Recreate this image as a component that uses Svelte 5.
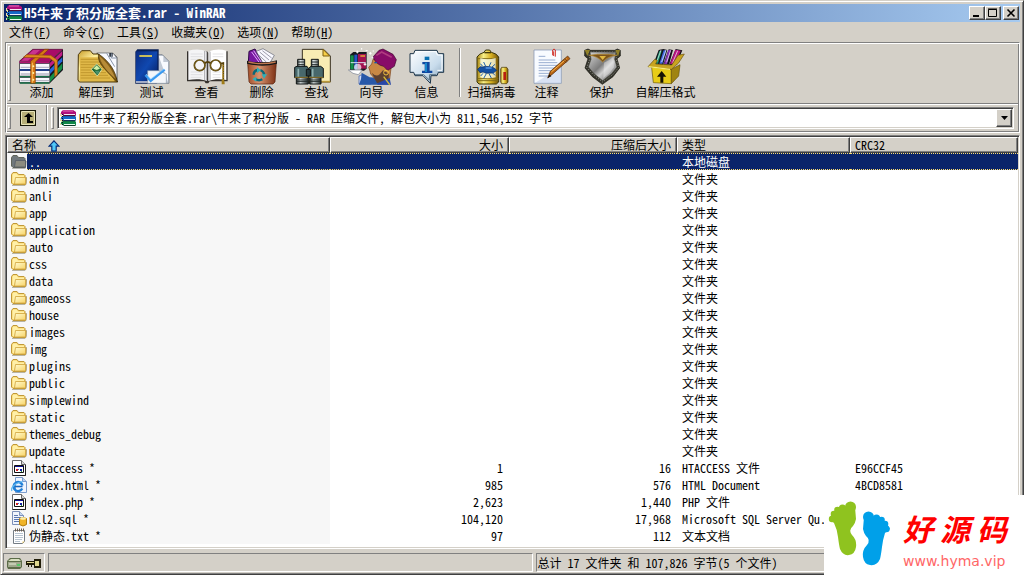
<script lang="ts">
  const menus = [
    { label: '文件', key: 'F' },
    { label: '命令', key: 'C' },
    { label: '工具', key: 'S' },
    { label: '收藏夹', key: 'O' },
    { label: '选项', key: 'N' },
    { label: '帮助', key: 'H' },
  ];

  const mainTools = [
    { id: 'add', label: '添加', view: '42 18 165 111' },
    { id: 'extract', label: '解压到', view: '207 18 165 111' },
    { id: 'test', label: '测试', view: '372 18 165 111' },
    { id: 'view', label: '查看', view: '537 18 165 111' },
    { id: 'delete', label: '删除', view: '-3 18 165 111' },
    { id: 'find', label: '查找', view: '162 18 165 111' },
    { id: 'wizard', label: '向导', view: '327 18 165 111' },
    { id: 'info', label: '信息', view: '492 18 165 111' },
  ];
  const archiveTools = [
    { id: 'scan', label: '扫描病毒', view: '27 18 165 111' },
    { id: 'comment', label: '注释', view: '195 18 165 111' },
    { id: 'protect', label: '保护', view: '360 18 165 111' },
    { id: 'sfx', label: '自解压格式', view: '552 18 165 111' },
  ];

  const folders = [
    'admin', 'anli', 'app', 'application', 'auto', 'css', 'data', 'gameoss', 'house',
    'images', 'img', 'plugins', 'public', 'simplewind', 'static', 'themes_debug', 'update',
  ];

  type Row = { icon: string; name: string; size?: string; packed?: string; type: string; crc?: string };

  const rows: Row[] = [
    { icon: 'up', name: '..', type: '本地磁盘' },
    ...folders.map((name) => ({ icon: 'folder', name, type: '文件夹' })),
    { icon: 'file', name: '.htaccess *', size: '1', packed: '16', type: 'HTACCESS 文件', crc: 'E96CCF45' },
    { icon: 'html', name: 'index.html *', size: '985', packed: '576', type: 'HTML Document', crc: '4BCD8581' },
    { icon: 'file', name: 'index.php *', size: '2,623', packed: '1,440', type: 'PHP 文件' },
    { icon: 'sql', name: 'nll2.sql *', size: '104,120', packed: '17,968', type: 'Microsoft SQL Server Qu...' },
    { icon: 'txt', name: '伪静态.txt *', size: '97', packed: '112', type: '文本文档' },
  ];

  let selected = $state(0);
</script>

{#snippet rar()}
  <svg class="small-icon" viewBox="0 0 16 16" aria-hidden="true">
    <path d="M1 2l2-2h10l3 2v3l-1 1H4L1 4z" fill="#b0107c" />
    <path d="M3 1h10" stroke="#e070b8" />
    <path d="M4 4.500h11" stroke="#f8e8f4" />
    <path d="M1 7l2-1h12l1 1v3l-1 1H4L1 9z" fill="#1668c8" />
    <path d="M4 9.500h11" stroke="#e8f0ff" />
    <path d="M1 12l2-1h12l1 1v3l-1 1H4l-3-2z" fill="#108848" />
    <path d="M4 14.500h11" stroke="#e8fff0" />
    <path d="M3 5.700h12.500M3 10.700h12.500M4 15.700h11.500" stroke="#14141c" stroke-width=".8" />
    <path d="M.5 3v3M1.500 5v2M.5 8v3M1.500 10v2M.5 13v2" stroke="#e8dca0" />
    <path d="M2.500 4v11" stroke="#101018" stroke-dasharray="1 1" />
  </svg>
{/snippet}

{#snippet toolIcon(id: string, view: string)}
  <svg class="tool-icon" viewBox={view} aria-hidden="true">
    {#if id === 'add'}
      <path d="M148 60l41-38v62l-41 41z" fill="#15151c" />
      <path d="M150 62l37-36v14l-37 36z" fill="#c01c84" />
      <path d="M150 82l37-36v12l-37 38z" fill="#2468d8" />
      <path d="M150 104l37-40v16l-37 40z" fill="#149048" />
      <path d="M58 58l40-36h90l-40 38z" fill="#a80c68" stroke="#46042c" stroke-width="2" />
      <path d="M64 56l36-32h20L84 56z" fill="#c83490" />
      <path d="M58 60h90v64H58z" fill="#20202c" />
      <path d="M60 65h88v16H60zM60 87h88v14H60zM60 107h88v14H60z" fill="#f8f8fc" />
      <path d="M62 76h86M62 96h86M62 116h86" stroke="#b8b8c8" stroke-width="4" />
      <path d="M58 61h90" stroke="#b01470" stroke-width="5" />
      <path d="M58 84h90" stroke="#2450b8" stroke-width="4" />
      <path d="M58 104h90M60 123h88" stroke="#187048" stroke-width="4" />
      <path d="M92 58l42-36h12l-40 38v64H92z" fill="#d87814" stroke="#7c3c04" stroke-width="2" />
      <path d="M80 38l72 2 20 14v43l-8 8V60l-16-12-78-2z" fill="#e08a20" stroke="#904c08" stroke-width="2" />
      <path d="M97 62v60" stroke="#f8c060" stroke-width="3" />
      <circle cx="100" cy="73" r="3" fill="#fff0a0" />
      <circle cx="100" cy="93" r="3" fill="#fff0a0" />
      <circle cx="100" cy="113" r="3" fill="#fff0a0" />
    {:else if id === 'extract'}
      <path d="M290 32h48l14 14v74H290z" fill="#202830" />
      <path d="M292 34h36v10h10v-10l12 13v62z" fill="#f8faff" />
      <path d="M320 34l24 40M334 34v14h16" fill="none" stroke="#8894a8" stroke-width="3" />
      <path d="M235 38l10-12h26l8 10h16l58 84H238l-4-6z" fill="url(#gold)" stroke="#4c3808" stroke-width="3" />
      <path d="M240 46h60l44 72H240z" fill="#e0b848" />
      <path d="M242 52h52M242 60h60M242 68h64M242 76h66M242 84h70M242 92h76M242 100h82M242 108h88" stroke="#b08820" stroke-width="2" />
      <path d="M296 36c-4 24 8 36 56 84-6-34-22-60-56-84z" fill="#805c18" stroke="#3c2800" stroke-width="2" />
      <path d="M298 42c4 20 18 42 48 68-8-24-24-48-48-68z" fill="#b88c38" />
      <path d="M274 82l16-16 16 16-14 20z" fill="#206830" stroke="#f8ffd8" stroke-width="2" />
      <path d="M280 80l10-10 10 10-10 4z" fill="#d0f0a8" />
      <path d="M284 86h16l-8 12z" fill="#48906c" />
    {:else if id === 'test'}
      <path d="M465 38h22l20 20v66h-42z" fill="#c0c8d4" stroke="#646c78" stroke-width="2" />
      <path d="M476 42h14v18h14v60" fill="#f8faff" />
      <path d="M406 29l6-7h64v96l-6 7h-64z" fill="#082058" />
      <path d="M408 28h64v90h-64z" fill="url(#blue)" />
      <path d="M408 120h64" stroke="#f0f0f8" stroke-width="4" />
      <path d="M418 42h38" stroke="#f0d850" stroke-width="5" />
      <path d="M443 86h32l24 10v28h-56z" fill="#f4f6fa" stroke="#8c98a8" stroke-width="2" />
      <path d="M436 99l16 18 42-34" fill="none" stroke="#3898f0" stroke-width="7" />
      <path d="M438 96l14 15 40-30" fill="none" stroke="#90d0ff" stroke-width="2" />
    {:else if id === 'view'}
      <path d="M561 28h60l4 4 4-4h54v90h-54l-4 6h-8l-4-6h-52z" fill="#34302c" />
      <path d="M565 26c20-5 40-5 56 3v88c-16-6-36-6-56-3z" fill="#f4f4f6" />
      <path d="M625 29c18-8 38-8 54-3v88c-18-3-38-3-54 3z" fill="#fff" />
      <path d="M614 27v87M620 30v86M630 29v86" stroke="#a8a8ac" stroke-width="3" />
      <path d="M572 36h36M572 44h36M572 52h30M572 90h36M572 98h36M572 106h32M638 36h32M638 44h32M638 90h24M638 98h24M638 106h24" stroke="#d4d4d8" stroke-width="2" />
      <g fill="none" stroke="#54400c" stroke-width="5">
        <circle cx="599" cy="70" r="16" />
        <circle cx="647" cy="70" r="16" />
        <path d="M613 65q10-10 20 0M662 65l8-2v62" />
      </g>
      <g fill="none" stroke="#b89838" stroke-width="1">
        <circle cx="599" cy="70" r="16" />
        <circle cx="647" cy="70" r="16" />
      </g>
      <path d="M669 68v58" stroke="#c09828" stroke-width="4" stroke-dasharray="5 2" />
      <path d="M665 112h7l2 15h-9z" fill="#a07c18" />
    {:else if id === 'delete'}
      <path d="M42 28l18-7 24 42H40z" fill="#7818a0" stroke="#2c0844" stroke-width="3" />
      <path d="M50 30l24 33M56 26l24 36" stroke="#e0b0f8" stroke-width="3" />
      <path d="M64 28l20-8 34 20-14 24H84z" fill="#f8f8ff" stroke="#606470" stroke-width="2" />
      <path d="M74 30l28 24M82 26l28 22M70 38l24 22" stroke="#9c9cac" stroke-width="3" />
      <path d="M38 62h86l-4 58-6 6H48l-6-6z" fill="url(#rust)" stroke="#54200c" stroke-width="2" />
      <path d="M36 56q44 12 90-1v10q-44 12-90 0z" fill="#181818" />
      <path d="M40 60q42 10 82 0" fill="none" stroke="#c07850" stroke-width="4" />
      <g fill="none" stroke="#0c6878" stroke-width="7">
        <path d="M56 98q0-12 12-14" />
        <path d="M76 84q10 4 12 14" />
        <path d="M82 112q-10 6-22-1" />
      </g>
      <path d="M66 76l12 9-12 8zM96 97l-9 13-7-13zM64 104v15l-12-8z" fill="#30b0b8" />
    {:else if id === 'find'}
      <path d="M202 22h64l20 20v78h-84z" fill="#f8ecb4" stroke="#383020" stroke-width="3" />
      <path d="M264 22v20h20z" fill="#f8d048" stroke="#7c5c0c" stroke-width="3" />
      <path d="M204 119h82" stroke="#b89838" stroke-width="5" />
      <g stroke="#101414" stroke-width="3">
        <path d="M188 52h21v22l11 8v44h-36V82l4-8z" fill="url(#steel)" />
        <path d="M229 52h21v22l8 8v44h-34V82l5-8z" fill="url(#steel)" />
        <path d="M179 76l7-3h30l4 6v28h-41z" fill="#48686c" />
        <path d="M221 79l7-6h29l8 6v28h-44z" fill="#48686c" />
        <path d="M214 82h12v20h-12z" fill="#283c40" />
      </g>
      <path d="M188 60h22M188 68h22M229 60h22M229 68h22M184 114h36M224 114h34M184 119h36M224 119h34" stroke="#202828" stroke-width="3" />
      <path d="M190 80v24M233 80v24" stroke="#90b0b0" stroke-width="5" />
      <path d="M180 106h40M222 106h42" stroke="#c89828" stroke-width="2" />
    {:else if id === 'wizard'}
      <path d="M345 38l10-8h40v50l-8 6h-42z" fill="#181820" />
      <path d="M346 40h10v42h-10z" fill="#14904c" />
      <path d="M358 38h9v44h-9z" fill="#2454c8" />
      <path d="M369 36h24v44h-24z" fill="#a01050" />
      <path d="M376 42h14" stroke="#f0b830" stroke-width="4" />
      <path d="M347 62h45" stroke="#d8e0f0" stroke-width="3" />
      <circle cx="368" cy="76" r="11" fill="#fff" opacity=".7" />
      <path d="M340 84h42l-12 14-16-4z" fill="#fff" stroke="#788090" stroke-width="2" />
      <path d="M372 102q12-8 22 4l14 20h-36z" fill="#d0dcf8" stroke="#3858a8" stroke-width="2" />
      <path d="M380 92l24 14 60 4v18h-92q8-16 8-36z" fill="#2858a8" />
      <path d="M404 84l-3-8 9-10 4-14 28 4 26 22-4 34-36 8-14-16-7-8z" fill="#c88844" stroke="#784018" stroke-width="2" />
      <path d="M410 92q14 14 24 5l10-12 18 10-2 28h-34z" fill="#5c4030" />
      <path d="M414 45l18-20 12-4 30 16 10 16-6 20-20 12-12-12q-22-4-32-28z" fill="#880c68" stroke="#3c042c" stroke-width="2" />
      <path d="M424 40l16-10 30 16" fill="none" stroke="#b03c80" stroke-width="5" />
      <circle cx="453" cy="92" r="7" fill="none" stroke="#f0c040" stroke-width="3" />
      <path d="M418 62h8" stroke="#1858a8" stroke-width="4" />
      <path d="M430 122l34-14 4 20h-42z" fill="#2848a8" />
      <path d="M446 104l18 24" stroke="#d8c038" stroke-width="4" />
      <g stroke="#fff" stroke-width="3">
        <path d="M363 30h8M367 26v8M392 26h6M402 34h8M406 30v8M386 67h8M390 63v8M410 46h5M380 18v5M413 27h4" />
      </g>
    {:else if id === 'info'}
      <path d="M540 25h66l4 10h16v56h-16l-4 10h-18l-2 23-22-23h-24l-4-10h-11V35h11z" fill="url(#ice)" stroke="#1c3448" stroke-width="3" />
      <path d="M543 29h60l4 10h14v46h-14" fill="none" stroke="#fff" stroke-width="3" />
      <path d="M540 98h26l17 16 1-16h20" fill="none" stroke="#5c7484" stroke-width="3" />
      <path d="M569 44h14v10h-14z" fill="#0870b0" />
      <path d="M562 60h22v26h8v7h-31v-7h8V67h-7z" fill="#1048a0" />
      <path d="M573 62v28" stroke="#20a8e0" stroke-width="4" />
    {:else if id === 'scan'}
      <path d="M92 24h12l5 7q16 3 22 14v75l-7 6H72l-6-6V45q6-10 21-14z" fill="url(#can)" stroke="#38340c" stroke-width="3" />
      <path d="M68 50h62M68 110h62M68 116h62" stroke="#806c18" stroke-width="3" />
      <path d="M88 32h20" stroke="#483c08" stroke-width="4" />
      <path d="M76 48q20 8 46 0v58q-24 6-46 0z" fill="#f8fcf0" opacity=".75" />
      <path d="M68 82l8-8 7 1 8-2 14 1 13 4 7 7-10 8-22 1-9-4-9 2z" fill="#1450a0" stroke="#082860" stroke-width="2" />
      <path d="M92 78h18" stroke="#60a0f0" stroke-width="4" />
      <path d="M84 74l-8-9M92 73l-6-13M102 74l6-13M110 76l10-9M84 94l-7 8M94 95l-8 14M102 95l7 13M112 92l8 8" fill="none" stroke="#2060a8" stroke-width="3" />
      <path d="M140 76h15l4 6v38l-4 5h-15l-3-5V81z" fill="url(#can)" stroke="#403008" stroke-width="2" />
      <path d="M145 90h8v24h-8z" fill="#b82010" />
    {:else if id === 'comment'}
      <path d="M240 24h82v100h-82z" fill="#f8fbff" stroke="#788cac" stroke-width="2" />
      <path d="M254 43h20M254 54h50M254 62h56M254 70h56M254 78h48M254 86h44M254 94h40M254 102h28" stroke="#98acd0" stroke-width="3" />
      <path d="M241 124l80-48v48z" fill="#a8bce0" opacity=".4" />
      <path d="M296 40V24q4-6 8 0v20M299 28v14" fill="none" stroke="#d03028" stroke-width="3" />
      <path d="M281 108l8-20 52-46 7 8-52 46z" fill="#b86414" stroke="#4c2404" stroke-width="2" />
      <path d="M292 90l46-40" stroke="#f8b850" stroke-width="3" />
      <path d="M281 108l5-11 6 6z" fill="#181008" />
      <path d="M328 53l9 10M332 50l8 8" stroke="#4c2c08" stroke-width="2" />
    {:else if id === 'protect'}
      <path d="M392 25l10-4 8 4h72l8-4 9 4v17l-10 8 8 28-20 26-32 23-30-23-22-26 9-28-10-8z" fill="#34342c" stroke="#181810" stroke-width="2" />
      <path d="M402 30h88l-4 20 8 26-18 22-30 22-28-22-20-22 10-26z" fill="none" stroke="#c8c8c0" stroke-width="2" stroke-dasharray="3 5" />
      <path d="M408 30h78l-4 22 7 23-16 20-27 21-26-21-17-20 8-23z" fill="url(#shield)" stroke="#484840" stroke-width="2" />
      <path d="M450 62l16-8 12-10 2 32-14 18-18 14z" fill="#fff" opacity=".35" />
      <path d="M406 40q24 2 40 20 16-18 42-20l-24-3h-34z" fill="#7c541c" stroke="#b88c30" stroke-width="2" />
      <path d="M436 42h20l-10 12z" fill="#e0b840" />
      <path d="M392 24h16l-8 18zM484 24h14l-6 20z" fill="#908028" />
    {:else if id === 'sfx'}
      <path d="M598 67l16-43 14-3 12 3-13 45zM628 68l16-46 13 2-12 44zM645 70l20-49 20 4-18 44z" fill="#14141c" />
      <path d="M604 65l12-38h7l-11 38z" fill="#14906c" />
      <path d="M616 65l13-40h8l-12 40z" fill="#4068e0" />
      <path d="M630 66l13-42h8l-12 42z" fill="#8030b0" />
      <path d="M648 66l16-43 16 3-16 40z" fill="#b81480" />
      <path d="M608 60l13-36M623 60l13-36M638 61l12-36M656 62l15-36" stroke="#fff" stroke-width="2" />
      <path d="M592 68l60 14v43l-54-3z" fill="#e8cc18" stroke="#68540c" stroke-width="2" />
      <path d="M652 82l26-14-4 34-22 23z" fill="#a08410" stroke="#68540c" stroke-width="2" />
      <path d="M582 74l20-22 8 3-5 11 48 3 19-29 19-4-18 28-21 18z" fill="#c8a420" stroke="#68500c" stroke-width="2" />
      <path d="M584 74l64 8" stroke="#f8ec78" stroke-width="4" />
      <path d="M619 122v-18h-10l14-17 14 17h-9v18z" fill="#181404" />
    {/if}
  </svg>
{/snippet}

{#snippet fileIcon(id: string)}
  <svg class="small-icon" viewBox="0 0 16 16" aria-hidden="true">
    {#if id === 'folder'}
      <path d="M1 14.500h13l1.500-2V6" fill="none" stroke="#b8b4a4" />
      <path d="M.5 3.500l1.500-2h4l1.500 2H13l1 1v2l1 .5-.5 6.500H2L.5 12z" fill="#f8d468" stroke="#c09838" />
      <path d="M1.500 4l1-1.500h3L7 4.500h6V6H5L3 12H1.500z" fill="#fff0a8" />
      <path d="M4.500 6.500h10v6.500H3.500z" fill="url(#folder)" stroke="#d0a440" stroke-width=".8" />
    {:else if id === 'up'}
      <path d="M.5 3.500l1.500-2h4l1.500 2H13l1 1v2l1 .5-.5 6.500H2L.5 12z" fill="#70787c" stroke="#606458" />
      <path d="M4.500 6.500h10v6.500H3.500z" fill="#8c8c80" stroke="#545c64" stroke-width=".8" />
      <path d="M1 14.500h13.500" stroke="#b4b4b0" />
    {:else if id === 'file'}
      <path d="M1.500.5h9l4 4v11h-13z" fill="#fff" stroke="#686868" />
      <path d="M14.500 4.500v11h-13" fill="none" stroke="#202020" />
      <path d="M10.500.5v4h4" fill="#d8d8d8" stroke="#686868" />
      <path d="M3.500 5.500h9v7h-9z" fill="#fff" stroke="#101010" />
      <path d="M4 6.500h8" stroke="#101090" />
      <path d="M5 9h2v2H5z" fill="#d02020" />
      <path d="M7 9h1v1H7z" fill="#3060e0" />
      <path d="M9 9h2v2H9z" fill="#1020a0" />
      <path d="M10 11h1v1h-1z" fill="#20a040" />
    {:else if id === 'html'}
      <path d="M4.500.5h7l4 4v11h-11z" fill="#f0f6ff" stroke="#7c9ccc" />
      <path d="M11.500.5v4h4" fill="#b8d0f0" stroke="#7c9ccc" />
      <path d="M2 9.500h9.500" stroke="#1868c0" stroke-width="1.600" />
      <path d="M11.200 11.500a4.500 4.500 0 1 1 .3-3" fill="none" stroke="#2080d8" stroke-width="2.400" />
      <path d="M1 14c-2-3 4-9 11-9.500" fill="none" stroke="#60b8f0" stroke-width="1.200" />
    {:else if id === 'sql'}
      <path d="M1.500.5h7l4 4v9h-11z" fill="#f0f4fc" stroke="#7c90b8" />
      <path d="M8.500.5v4h4" fill="#c8d8f0" stroke="#7c90b8" />
      <path d="M3 4.500h4M3 6.500h7M3 8.500h7M3 10.500h5" stroke="#5c78b0" />
      <path d="M8.500 7.500q3.500-2 7 0v6q-3.500 3-7 0z" fill="#f0b428" stroke="#b07c10" />
      <ellipse cx="12" cy="7.500" rx="3" ry="1.200" fill="#fff0a8" />
    {:else}
      <path d="M2.500 2.500h11v11l-2 2h-9z" fill="#fff" stroke="#747c84" />
      <path d="M4 5.500h8M4 7.500h8M4 9.500h8M4 11.500h7M4 13.500h5" stroke="#b8c4d0" />
      <path d="M4.500.5v3M6.500.5v3M8.500.5v3M10.500.5v3M12.500.5v3" stroke="#6c5c4c" />
      <path d="M11.500 15.500v-2h2z" fill="#e8c860" />
    {/if}
  </svg>
{/snippet}

<!-- shared gradients for the toolbar and folder icons -->
<svg class="defs" aria-hidden="true">
  <defs>
    <linearGradient id="gold" x2="1" y2="1">
      <stop offset="0" stop-color="#c89c28" /><stop offset=".3" stop-color="#fff0a0" /><stop offset="1" stop-color="#986c10" />
    </linearGradient>
    <linearGradient id="blue" x2="1" y2="1">
      <stop offset="0" stop-color="#0c2c80" /><stop offset=".5" stop-color="#1048b0" /><stop offset="1" stop-color="#061c5c" />
    </linearGradient>
    <linearGradient id="rust">
      <stop offset="0" stop-color="#a04c28" /><stop offset=".4" stop-color="#d89470" /><stop offset="1" stop-color="#7c3014" />
    </linearGradient>
    <linearGradient id="steel">
      <stop offset="0" stop-color="#283030" /><stop offset=".35" stop-color="#e0e8e8" /><stop offset="1" stop-color="#202828" />
    </linearGradient>
    <linearGradient id="ice" x2="1" y2="1">
      <stop offset="0" stop-color="#fff" /><stop offset=".6" stop-color="#c8dcec" /><stop offset="1" stop-color="#7c98b0" />
    </linearGradient>
    <linearGradient id="can">
      <stop offset="0" stop-color="#a88410" /><stop offset=".3" stop-color="#f8f088" /><stop offset=".65" stop-color="#d8b020" /><stop offset="1" stop-color="#705008" />
    </linearGradient>
    <linearGradient id="shield" x2="1" y2="1">
      <stop offset="0" stop-color="#d8d8d8" /><stop offset=".45" stop-color="#7c7c7c" /><stop offset=".6" stop-color="#d0d0d0" /><stop offset="1" stop-color="#484848" />
    </linearGradient>
    <linearGradient id="folder" x2="1" y2="1">
      <stop offset="0" stop-color="#fffbd0" /><stop offset="1" stop-color="#f8d468" />
    </linearGradient>
  </defs>
</svg>

<div class="window">
  <header class="titlebar">
    {@render rar()}
    <h1>H5牛来了积分版全套.rar - WinRAR</h1>
    <div class="caption-buttons">
      <button aria-label="最小化"><svg viewBox="0 0 12 10"><path d="M2 8h6" stroke="#000" stroke-width="2" /></svg></button>
      <button aria-label="最大化"><svg viewBox="0 0 12 10"><path d="M1.500 1.500h8v7h-8zM1 1h9" fill="none" stroke="#000" /></svg></button>
      <button class="close" aria-label="关闭"><svg viewBox="0 0 12 10"><path d="M2.500 1.500l7 7M9.500 1.500l-7 7" stroke="#000" stroke-width="1.600" /></svg></button>
    </div>
  </header>

  <nav class="menubar">
    {#each menus as menu}
      <button>{menu.label}(<u>{menu.key}</u>)</button>
    {/each}
  </nav>

  <div class="rebar">
    <div class="toolbar">
      <span class="grip"></span>
      {#each mainTools as tool}
        <button class="tool">
          {@render toolIcon(tool.id, tool.view)}
          {tool.label}
        </button>
      {/each}
      <span class="divider"></span>
      {#each archiveTools as tool}
        <button class="tool" class:wide={tool.id === 'sfx'}>
          {@render toolIcon(tool.id, tool.view)}
          {tool.label}
        </button>
      {/each}
    </div>

    <div class="address">
      <span class="grip"></span>
      <button class="up" aria-label="上一级">
        <svg viewBox="0 0 16 16">
          <path d="M0 0h16v16H0z" fill="#181808" />
          <path d="M1.500 1.500h13v13h-13z" fill="#b8b078" stroke="#e8e4b8" />
          <path d="M7 12V7H4l4.500-4L13 7h-3v4h3v2H7z" fill="#000" />
        </svg>
      </button>
      <span class="band-line"></span>
      <span class="grip"></span>
      <div class="combo">
        {@render rar()}
        <select aria-label="路径">
          <option>H5牛来了积分版全套.rar\牛来了积分版 - RAR 压缩文件, 解包大小为 811,546,152 字节</option>
        </select>
        <span class="arrow"><svg viewBox="0 0 7 4"><path d="M0 0h7L3.500 4z" /></svg></span>
      </div>
    </div>
  </div>

  <main class="list">
    <table>
      <colgroup>
        <col class="col-name" />
        <col class="col-size" />
        <col class="col-packed" />
        <col class="col-type" />
        <col />
      </colgroup>
      <thead>
        <tr>
          <th>
            名称
            <svg class="sort" viewBox="0 0 12 12" aria-hidden="true">
              <path d="M6 .8l5 5.400H8.200v5H3.800v-5H1z" fill="#50c8f8" stroke="#082c78" stroke-width="1.200" />
            </svg>
          </th>
          <th class="num">大小</th>
          <th class="num">压缩后大小</th>
          <th>类型</th>
          <th>CRC32</th>
        </tr>
      </thead>
      <tbody>
        {#each rows as row, i}
          <tr class:selected={selected === i} onclick={() => (selected = i)}>
            <td class="name">
              <div class="entry">
                {@render fileIcon(row.icon)}
                <span>{row.name}</span>
              </div>
            </td>
            <td class="num">{row.size ?? ''}</td>
            <td class="num">{row.packed ?? ''}</td>
            <td>{row.type}</td>
            <td>{row.crc ?? ''}</td>
          </tr>
        {/each}
      </tbody>
    </table>
  </main>

  <footer class="statusbar">
    <div class="panel icons">
      <svg viewBox="0 0 36 14" aria-hidden="true">
        <path d="M1 5l3-3h10l2 3v6l-2 2H2l-1-2z" fill="#5c6c48" />
        <path d="M2 5l3-2h8l2 2z" fill="#d8e0c0" />
        <path d="M2 6h13v5H2z" fill="#a0a88c" />
        <path d="M3 8h7" stroke="#e8f0d8" />
        <path d="M11 8h3v2h-3z" fill="#58c868" />
        <path d="M20 5h8V3h7v9h-7V9h-2v2h-1V9h-2v2h-1V9h-2z" fill="#201c08" />
        <path d="M29 5h4v5h-4zM21 6h7v1h-7z" fill="#e0d890" />
      </svg>
    </div>
    <div class="panel"></div>
    <div class="panel">总计 17 文件夹 和 107,826 字节(5 个文件)</div>
  </footer>
</div>

<aside class="watermark">
  <svg viewBox="0 0 66 80" aria-hidden="true">
    <g fill="#8fc31f">
      <circle cx="26.500" cy="12" r="5.500" />
      <circle cx="18.500" cy="13" r="3.600" />
      <circle cx="13.500" cy="15" r="3.300" />
      <circle cx="10" cy="19" r="3.300" />
      <circle cx="8" cy="24" r="3.200" />
      <path d="M9 17q8-6 22-5l1 12q-1 5-3 7-5 4-1 9 5 5 4 12-1 7-7 8-6 1-9-6-1-4-2-12-1-8-4-14l-5-4z" />
    </g>
    <g fill="#00a0e9">
      <circle cx="44.500" cy="22" r="5.500" />
      <circle cx="52.500" cy="23" r="3.600" />
      <circle cx="57.500" cy="25" r="3.300" />
      <circle cx="61" cy="29" r="3.300" />
      <circle cx="62.500" cy="34" r="3.200" />
      <path d="M62 27q-8-6-22-5l-1 12q1 5 3 7 5 4 1 9-5 5-4 12 1 7 7 8 7 1 10-6 1-4 2-12 1-8 3-14l5-4z" />
    </g>
  </svg>
  <div class="brand">
    <strong><span>好</span><span>源</span><span>码</span></strong>
    <small>www.hyma.vip</small>
  </div>
</aside>

<style>
  :global(body) { margin: 0; background: #d4d0c8; }

  .window {
    --face: #d4d0c8;
    --shade: #808080;
    --dark: #404040;
    box-sizing: border-box;
    min-height: 100vh;
    padding: 2px;
    display: flex;
    flex-direction: column;
    border-top: 1px solid #d4d0c8;
    border-left: 1px solid #d4d0c8;
    border-right: 1px solid var(--dark);
    border-bottom: 1px solid var(--dark);
    box-shadow: inset 1px 1px #fff, inset -1px -1px var(--shade);
    background: var(--face);
    font: 12px/16px "Noto Sans Mono CJK SC", "Noto Sans CJK SC", monospace;
    color: #000;
  }
  .defs { position: absolute; width: 0; height: 0; }

  button {
    padding: 0;
    border: 0;
    background: none;
    color: inherit;
    font: inherit;
    white-space: nowrap;
  }
  .small-icon { display: block; width: 16px; height: 16px; flex: none; }

  /* ── Title bar ── */
  .titlebar {
    display: flex;
    align-items: center;
    gap: 2px;
    height: 18px;
    margin: 1px 1px 0;
    padding: 0 1px 0 2px;
    background: linear-gradient(90deg, #0a246a, #a6caf0);
    color: #fff;
  }
  h1 { flex: 1; margin: 0; font-size: 13px; line-height: 18px; font-weight: 700; white-space: nowrap; }
  .caption-buttons { display: flex; }
  .caption-buttons button {
    display: flex;
    align-items: center;
    justify-content: center;
    box-sizing: border-box;
    width: 16px;
    height: 14px;
    border: 1px solid;
    border-color: #fff var(--dark) var(--dark) #fff;
    box-shadow: inset -1px -1px var(--shade);
    background: var(--face);
  }
  .caption-buttons svg { width: 12px; height: 10px; }
  .caption-buttons .close { margin-left: 2px; }

  /* ── Menu ── */
  .menubar { display: flex; height: 20px; }
  .menubar button { padding: 0 6px; }

  /* ── Toolbars ── */
  .rebar {
    margin: 0 1px 0 2px;
    border: 1px solid;
    border-color: var(--shade) #fff #fff var(--shade);
    box-shadow: inset 1px 1px #fff, inset -1px -1px var(--shade);
    padding: 1px;
  }
  .toolbar {
    display: flex;
    height: 60px;
    padding: 0 1px;
    border-bottom: 1px solid var(--shade);
    box-sizing: border-box;
  }
  .grip {
    box-sizing: border-box;
    width: 3px;
    flex: none;
    margin: 2px 3px 2px 0;
    border: 1px solid;
    border-color: #fff var(--shade) var(--shade) #fff;
  }
  .tool {
    display: flex;
    flex-direction: column;
    align-items: center;
    flex: none;
    width: 55px;
    padding-top: 4px;
    line-height: 14px;
  }
  .tool.wide { width: 73px; }
  .tool-icon { width: 55px; height: 37px; flex: none; }
  .divider {
    width: 0;
    flex: none;
    margin: 4px 3px 6px 5px;
    border-left: 1px solid var(--shade);
    border-right: 1px solid #fff;
  }
  .address {
    display: flex;
    height: 27px;
    padding: 0 4px 0 1px;
    border-top: 1px solid #fff;
    box-sizing: border-box;
  }
  .up { display: flex; align-items: center; justify-content: center; width: 28px; }
  .up svg { width: 16px; height: 16px; }
  .band-line { width: 0; margin: 0 3px 0 4px; border-left: 1px solid var(--shade); border-right: 1px solid #fff; }
  .combo {
    display: flex;
    align-items: center;
    flex: 1;
    min-width: 0;
    box-sizing: border-box;
    height: 22px;
    margin-top: 2px;
    padding-left: 2px;
    border: 1px solid;
    border-color: var(--shade) #fff #fff var(--shade);
    box-shadow: inset 1px 1px var(--dark), inset -1px -1px var(--face);
    background: #fff;
    gap: 3px;
  }
  .combo select {
    flex: 1;
    min-width: 0;
    height: 18px;
    padding: 0;
    border: 0;
    appearance: none;
    background: none;
    color: inherit;
    font: inherit;
  }
  .arrow {
    display: flex;
    align-items: center;
    justify-content: center;
    box-sizing: border-box;
    width: 16px;
    height: 18px;
    margin-right: 1px;
    border: 1px solid;
    border-color: #fff var(--dark) var(--dark) #fff;
    box-shadow: inset -1px -1px var(--shade);
    background: var(--face);
    pointer-events: none;
  }
  .arrow svg { width: 7px; height: 4px; }

  /* ── File list ── */
  .list {
    flex: 1;
    margin: 2px 1px 4px 2px;
    border: 1px solid;
    border-color: var(--shade) #fff #fff var(--shade);
    box-shadow: inset 1px 1px var(--dark), inset -1px -1px var(--face);
    background: #fff;
    padding: 1px;
  }
  table { width: 100%; table-layout: fixed; border-collapse: separate; border-spacing: 0; }
  .col-name { width: 323px; }
  .col-size { width: 179px; }
  .col-packed { width: 168px; }
  .col-type { width: 173px; }
  th {
    height: 16px;
    box-sizing: border-box;
    padding: 0 5px 0 4px;
    border: 1px solid;
    border-color: #fff var(--dark) var(--dark) #fff;
    box-shadow: inset -1px -1px var(--shade);
    background: var(--face);
    font-weight: 400;
    line-height: 14px;
    text-align: left;
    white-space: nowrap;
  }
  .sort { width: 12px; height: 12px; margin-left: 6px; vertical-align: -2px; }
  td {
    box-sizing: border-box;
    height: 17px;
    padding: 0 6px 0 5px;
    line-height: 15px;
    white-space: nowrap;
    overflow: hidden;
  }
  th.num, td.num { text-align: right; }
  td.name { padding: 0 0 0 4px; background: #f7f7f7; }
  .entry { display: flex; height: 17px; align-items: center; }
  .entry span { flex: 1; box-sizing: border-box; height: 17px; padding-left: 2px; line-height: 17px; }
  .selected td:not(.name), .selected .entry span {
    border-top: 1px dotted #ffe070;
    border-bottom: 1px dotted #ffe070;
    background: #0a246a;
    color: #fff;
    line-height: 15px;
  }

  /* ── Status bar ── */
  .statusbar { display: flex; gap: 3px; margin: 0 1px 0 0; }
  .panel {
    flex: 1;
    box-sizing: border-box;
    height: 19px;
    padding: 0 1px;
    border: 1px solid;
    border-color: var(--shade) #fff #fff var(--shade);
    line-height: 17px;
    white-space: nowrap;
  }
  .panel.icons { flex: none; width: 42px; padding: 0 2px; }
  .icons svg { display: block; width: 36px; height: 14px; margin-top: 2px; }

  .watermark {
    position: absolute;
    right: 0;
    bottom: 0;
    display: flex;
    width: 200px;
    height: 80px;
    background: #fff;
  }
  .watermark svg { width: 66px; height: 80px; flex: none; }
  .brand { display: flex; flex-direction: column; padding: 14px 0 0 13px; }
  .brand strong {
    display: flex;
    gap: 7px;
    font: italic 700 30px/38px "Noto Sans CJK SC", sans-serif;
    color: #f00;
  }
  .brand small { font: 14px/20px "DejaVu Sans", sans-serif; color: #f66; margin-top: 4px; }
</style>
